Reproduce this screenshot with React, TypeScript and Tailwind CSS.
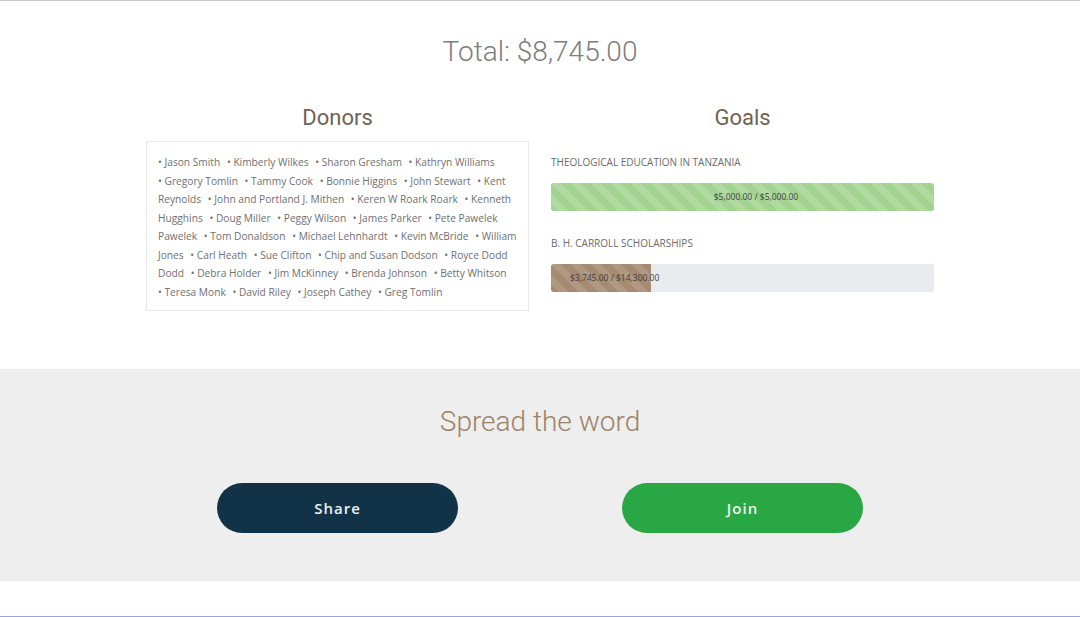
const donors = [
  "Jason Smith",
  "Kimberly Wilkes",
  "Sharon Gresham",
  "Kathryn Williams",
  "Gregory Tomlin",
  "Tammy Cook",
  "Bonnie Higgins",
  "John Stewart",
  "Kent Reynolds",
  "John and Portland J. Mithen",
  "Keren W Roark Roark",
  "Kenneth Hugghins",
  "Doug Miller",
  "Peggy Wilson",
  "James Parker",
  "Pete Pawelek Pawelek",
  "Tom Donaldson",
  "Michael Lehnhardt",
  "Kevin McBride",
  "William Jones",
  "Carl Heath",
  "Sue Clifton",
  "Chip and Susan Dodson",
  "Royce Dodd Dodd",
  "Debra Holder",
  "Jim McKinney",
  "Brenda Johnson",
  "Betty Whitson",
  "Teresa Monk",
  "David Riley",
  "Joseph Cathey",
  "Greg Tomlin",
];

const goals = [
  { title: "Theological Education in Tanzania", raised: 5000, target: 5000, color: "green" },
  { title: "B. H. Carroll Scholarships", raised: 3745, target: 14300, color: "brown" },
];

const money = (n: number) =>
  "$" + n.toLocaleString("en-US", { minimumFractionDigits: 2, maximumFractionDigits: 2 });

function GoalBar({ goal, first }: { goal: (typeof goals)[number]; first: boolean }) {
  const pct = Math.min(100, (goal.raised / goal.target) * 100);
  return (
    <div>
      <div
        className={
          (first ? "mt-[24px]" : "mt-[25px]") +
          " text-[10px] leading-[14px] uppercase text-[#6b6b6b]"
        }
      >
        {goal.title}
      </div>
      <div className="mt-[14px] h-[28px] rounded-[3px] bg-[#e9ecef] flex">
        <div
          className={
            goal.color === "green"
              ? "h-full rounded-[3px] flex items-center justify-center pl-[27px] whitespace-nowrap bg-[#a3d391] bg-[linear-gradient(45deg,rgba(255,255,255,.15)_25%,transparent_25%,transparent_50%,rgba(255,255,255,.15)_50%,rgba(255,255,255,.15)_75%,transparent_75%,transparent)] bg-size-[20px_20px]"
              : "h-full rounded-l-[3px] flex items-center justify-center pl-[27px] whitespace-nowrap bg-[#a68a72] bg-[linear-gradient(45deg,rgba(255,255,255,.12)_25%,transparent_25%,transparent_50%,rgba(255,255,255,.12)_50%,rgba(255,255,255,.12)_75%,transparent_75%,transparent)] bg-size-[20px_20px]"
          }
          style={{ width: `${pct}%` }}
        >
          <span className="text-[8.5px] text-[#3d3d3d]">
            {money(goal.raised)} / {money(goal.target)}
          </span>
        </div>
      </div>
    </div>
  );
}

export default function App() {
  return (
    <div className="w-[1080px] h-[617px] bg-white overflow-hidden font-['Open_Sans',sans-serif] flex flex-col">
      <div className="h-px bg-[#c9c9c9]" />
      <section className="pt-[33px] pb-[58px]">
        <h1 className="text-center font-['Roboto',sans-serif] font-light text-[28px] leading-[36px] text-[#7d7d7d]">
          Total: $8,745.00
        </h1>
        <div className="mx-auto mt-[35px] w-[788px] grid grid-cols-2 gap-x-[22px] items-start">
          <div>
            <h2 className="text-center font-['Roboto',sans-serif] text-[22px] leading-[26px] text-[#6f6354]">
              Donors
            </h2>
            <div className="mt-[10px] border border-[#e8e8e8] pl-[11px] pr-[8px] pt-[11px] pb-[9px] text-[10.2px] leading-[18.5px] text-[#707070]">
              {donors.map((d) => (
                <span key={d}>
                  <span className="mr-[4px]">
                    {"•\u00a0"}
                    {d}
                  </span>{" "}
                </span>
              ))}
            </div>
          </div>
          <div>
            <h2 className="text-center font-['Roboto',sans-serif] text-[22px] leading-[26px] text-[#6f6354]">
              Goals
            </h2>
            <div className="flex flex-col">
              {goals.map((g, i) => (
                <GoalBar key={g.title} goal={g} first={i === 0} />
              ))}
            </div>
          </div>
        </div>
      </section>
      <section className="h-[212px] bg-[#eeeeee] pt-[36px]">
        <h2 className="text-center font-['Roboto',sans-serif] font-light text-[28px] leading-[34px] text-[#9b8467]">
          Spread the word
        </h2>
        <div className="mx-auto mt-[44px] w-[788px] grid grid-cols-2 gap-x-[22px]">
          <div className="flex justify-center">
            <button className="w-[241px] h-[50px] rounded-full bg-[#123347] text-[15px] font-semibold tracking-[1px] text-[#eef2f4]">
              Share
            </button>
          </div>
          <div className="flex justify-center">
            <button className="w-[241px] h-[50px] rounded-full bg-[#29a745] text-[15px] font-semibold tracking-[1px] text-[#eef6ef]">
              Join
            </button>
          </div>
        </div>
      </section>
      <div className="flex-1 bg-white" />
      <div className="h-px bg-[#9aa5d3]" />
    </div>
  );
}
